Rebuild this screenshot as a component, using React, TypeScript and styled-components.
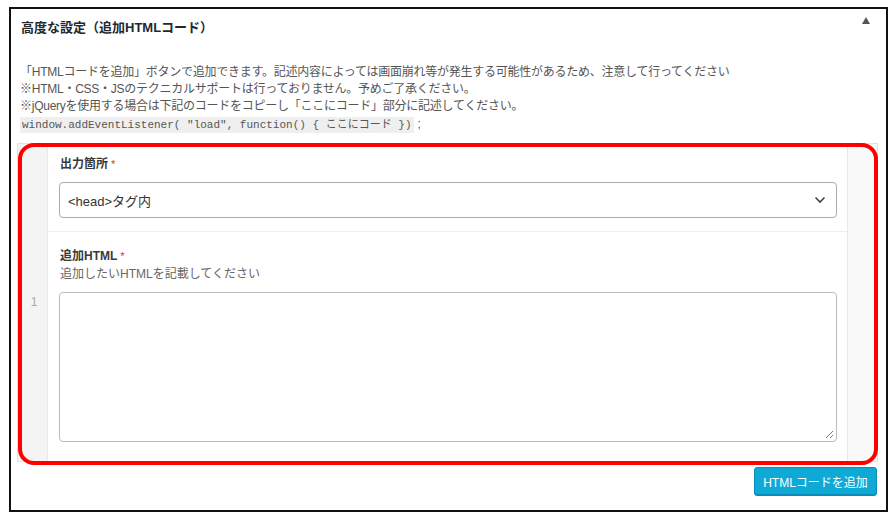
import React from "react";
import styled, { createGlobalStyle } from "styled-components";

const Global = createGlobalStyle`
  html, body { margin: 0; padding: 0; background: #fff; }
  body { font-family: "Liberation Sans", "Noto Sans CJK JP", sans-serif; color: #444; }
  * { box-sizing: border-box; }
`;

const Frame = styled.div`
  margin: 7px 0 0 9px;
  width: 879px;
  border: 2px solid #111;
  background: #fff;
  padding-bottom: 14px;
`;

const Header = styled.div`
  height: 38px;
  display: flex;
  align-items: center;
  justify-content: space-between;
  padding: 0 16px 0 10px;
`;

const Title = styled.h2`
  margin: 0;
  font-size: 13px;
  font-weight: bold;
  color: #23282d;
  line-height: 18px;
`;

const Toggle = styled.span`
  align-self: flex-start;
  margin-top: 8px;
  display: flex;
`;

const Body = styled.div`
  padding: 0 8px 0 6px;
`;

const Desc = styled.div`
  margin-top: 17px;
  padding-left: 3px;
  font-size: 12px;
  letter-spacing: -0.25px;
  line-height: 17px;
  color: #555;
`;

const CodeLine = styled.div`
  line-height: 19px;
  display: flex;
  align-items: center;
  gap: 3px;
  letter-spacing: 0;
`;

const Code = styled.code`
  font-family: "Liberation Mono", "Noto Sans CJK JP", monospace;
  font-size: 11px;
  background: #efefef;
  color: #555;
  padding: 0 3px 0 2px;
  line-height: 16px;
`;

const TableWrap = styled.div`
  position: relative;
  margin-top: 9px;
`;

const Table = styled.div`
  display: grid;
  grid-template-columns: 30px 1fr 30px;
  border: 1px solid #e1e1e1;
  background: #fff;
`;

const Handle = styled.div<{ $side: "left" | "right" }>`
  background: ${(p) => (p.$side === "left" ? "#f4f4f4" : "#f9f9f9")};
  ${(p) => (p.$side === "left" ? "border-right" : "border-left")}: 1px solid #e8e8e8;
  display: flex;
  align-items: center;
  justify-content: center;
  font-size: 12px;
  color: #aaa;
  padding: 0 0 2px 3px;
`;

const Fields = styled.div`
  display: flex;
  flex-direction: column;
`;

const Field = styled.div<{ $top: number; $bottom: number; $divider?: boolean }>`
  padding: ${(p) => p.$top}px 10px ${(p) => p.$bottom}px 11px;
  border-top: ${(p) => (p.$divider ? "1px solid #eeeeee" : "none")};
`;

const Label = styled.div`
  font-size: 12px;
  font-weight: bold;
  color: #3a3a3a;
  line-height: 17px;
  padding-left: 1px;
`;

const Req = styled.span`
  color: #dc3232;
  font-weight: normal;
  margin-left: 3px;
  font-size: 11px;
`;

const Help = styled.div`
  font-size: 12px;
  color: #666;
  line-height: 18px;
  padding-left: 1px;
`;

const Select = styled.div`
  margin-top: 9px;
  height: 36px;
  border: 1px solid #aaa;
  border-radius: 4px;
  display: flex;
  align-items: center;
  justify-content: space-between;
  padding: 0 10px 0 8px;
  font-size: 13px;
  color: #333;
`;

const TextArea = styled.div`
  position: relative;
  margin-top: 9px;
  height: 150px;
  border: 1px solid #bbb;
  border-radius: 4px;
`;

const Grip = styled.svg`
  position: absolute;
  right: 2px;
  bottom: 2px;
`;

const Footer = styled.div`
  display: flex;
  justify-content: flex-end;
  margin-top: 5px;
  padding-right: 1px;
`;

const Button = styled.button`
  height: 29px;
  width: 123px;
  border: 1px solid #0a8dba;
  border-radius: 3px;
  background: #0fa9d6;
  color: #fff;
  font-family: "Liberation Sans", "Noto Sans CJK JP", sans-serif;
  font-size: 12px;
  padding: 0;
  box-shadow: inset 0 -1px 0 #0a8dba;
`;

const Highlight = styled.div`
  position: absolute;
  left: 1px;
  top: 0px;
  width: 860px;
  height: 322px;
  border: 4px solid #ff0000;
  border-radius: 16px;
  pointer-events: none;
`;

export default function App() {
  return (
    <>
      <Global />
      <Frame>
        <Header>
          <Title>高度な設定（追加HTMLコード）</Title>
          <Toggle>
            <svg width="8" height="7" viewBox="0 0 8 7">
              <polygon points="4,0 8,7 0,7" fill="#555" />
            </svg>
          </Toggle>
        </Header>
        <Body>
          <Desc>
            <div>「HTMLコードを追加」ボタンで追加できます。記述内容によっては画面崩れ等が発生する可能性があるため、注意して行ってください</div>
            <div>※HTML・CSS・JSのテクニカルサポートは行っておりません。予めご了承ください。</div>
            <div>※jQueryを使用する場合は下記のコードをコピーし「ここにコード」部分に記述してください。</div>
            <CodeLine>
              <Code>window.addEventListener( "load", function() {"{"} ここにコード {"}"})</Code>
              <span>;</span>
            </CodeLine>
          </Desc>
          <TableWrap>
            <Table>
              <Handle $side="left">1</Handle>
              <Fields>
                <Field $top={12} $bottom={13}>
                  <Label>
                    出力箇所<Req>*</Req>
                  </Label>
                  <Select>
                    <span>&lt;head&gt;タグ内</span>
                    <svg width="12" height="8" viewBox="0 0 12 8">
                      <polyline points="1.5,1.5 6,6 10.5,1.5" fill="none" stroke="#444" strokeWidth="1.6" />
                    </svg>
                  </Select>
                </Field>
                <Field $top={16} $bottom={19} $divider>
                  <Label>
                    追加HTML<Req>*</Req>
                  </Label>
                  <Help>追加したいHTMLを記載してください</Help>
                  <TextArea>
                    <Grip width="9" height="9" viewBox="0 0 9 9">
                      <line x1="8" y1="1" x2="1" y2="8" stroke="#777" strokeWidth="1" />
                      <line x1="8" y1="5" x2="5" y2="8" stroke="#777" strokeWidth="1" />
                    </Grip>
                  </TextArea>
                </Field>
              </Fields>
              <Handle $side="right" />
            </Table>
            <Highlight />
          </TableWrap>
          <Footer>
            <Button>HTMLコードを追加</Button>
          </Footer>
        </Body>
      </Frame>
    </>
  );
}
